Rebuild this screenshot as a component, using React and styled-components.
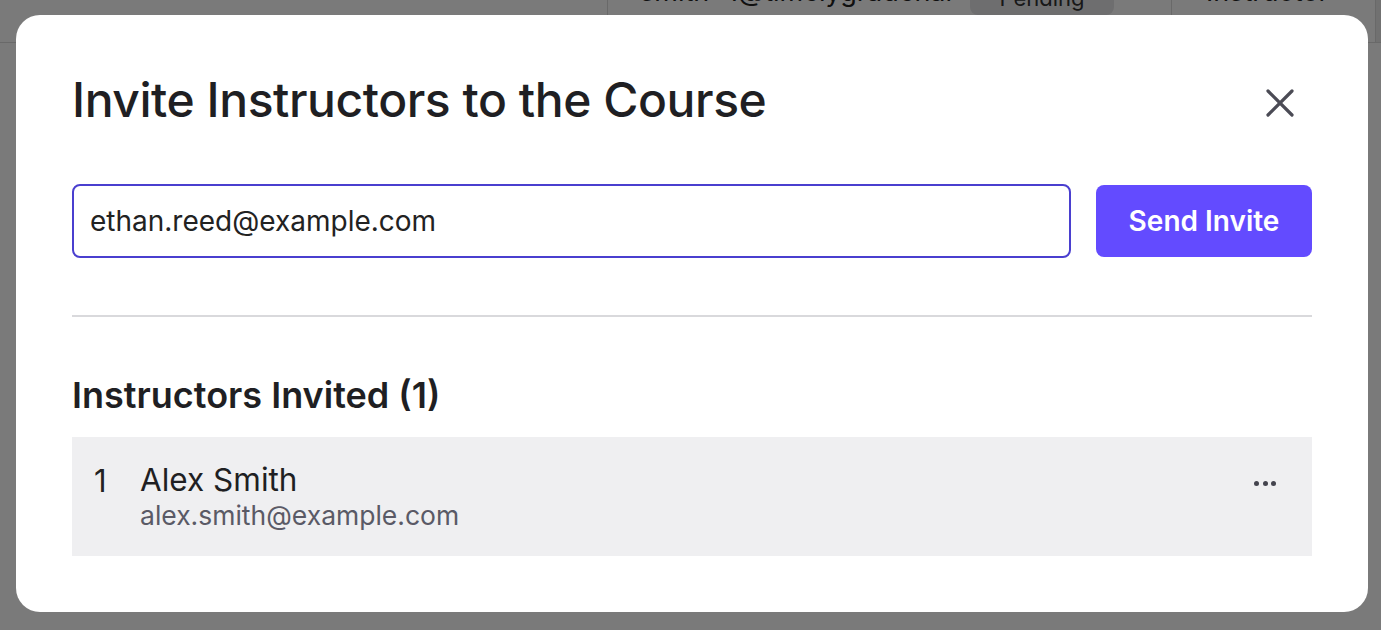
import React, { useState } from 'react';
import styled, { createGlobalStyle } from 'styled-components';

const GlobalStyle = createGlobalStyle`
  html, body { margin: 0; padding: 0; background: #fff; overflow: hidden; }
  body { font-family: Inter, 'Noto Sans', 'Liberation Sans', sans-serif; color: #1f1f23; }
  * { box-sizing: border-box; }
`;

/* page behind the dialog, scrolled so only the bottom of one row shows */
const Page = styled.div`height: 630px; margin-top: -43px;`;
const TableRow = styled.div`
  display: grid;
  grid-template-columns: 607px 564px 204px 1fr;
  height: 86px;
  border-bottom: 1px solid #dcdcdc;
`;
const Cell = styled.div`
  display: flex;
  align-items: center;
  gap: 18px;
  padding-left: ${({ $pad }) => $pad || 0}px;
  border-left: ${({ $line }) => ($line ? '1px solid #dcdcdc' : 'none')};
  background: ${({ $bg }) => $bg || 'transparent'};
  font-size: 27px;
  color: #222;
  white-space: nowrap;
  overflow: hidden;
`;
const CellText = styled.span`margin-bottom: 16px;`;
const StatusBadge = styled.span`
  display: inline-flex;
  align-items: flex-start;
  justify-content: center;
  width: 144px;
  height: 30px;
  border-radius: 8px;
  background: #e6e6e9;
  font-size: 22px;
  color: #333;
`;

const Overlay = styled.div`
  position: fixed;
  inset: 0;
  background: rgba(0, 0, 0, 0.52);
  display: flex;
  align-items: flex-start;
  padding: 15px 0 0 16px;
`;
const Dialog = styled.div`
  width: 1352px;
  height: 597px;
  background: #fff;
  border-radius: 24px;
  padding: 56px 56px 56px 56px;
  display: flex;
  flex-direction: column;
`;
const Header = styled.div`
  display: flex;
  align-items: center;
  justify-content: space-between;
`;
const Title = styled.h1`
  margin: 0;
  font-size: 48px;
  line-height: 1.2;
  font-weight: 500;
  letter-spacing: -0.45px;
  color: #1f1f23;
`;
const CloseButton = styled.button`
  width: 40px;
  height: 40px;
  margin: 7px 12px 0 0;
  border: none;
  background: none;
  padding: 0;
  display: flex;
  align-items: center;
  justify-content: center;
  cursor: pointer;
  color: #4b4b55;
`;
const InviteRow = styled.div`
  display: flex;
  align-items: center;
  gap: 25px;
  margin-top: 55px;
`;
const EmailInput = styled.input`
  flex: 1;
  height: 74px;
  border: 2px solid #4a3fcf;
  border-radius: 8px;
  padding: 0 16px;
  font-family: inherit;
  font-size: 28px;
  color: #222;
  outline: none;
`;
const PrimaryButton = styled.button`
  width: 216px;
  height: 72px;
  border: none;
  border-radius: 8px;
  background: #634bff;
  color: #fff;
  font-family: inherit;
  font-size: 28px;
  font-weight: 600;
  cursor: pointer;
`;
const Divider = styled.hr`
  margin: 57px 0 0;
  border: none;
  border-top: 2px solid #d9d9dc;
`;
const SectionTitle = styled.h2`
  margin: 57px 0 0;
  font-size: 36px;
  line-height: 1.2;
  font-weight: 600;
  color: #1f1f23;
`;
const List = styled.div`margin-top: 20px;`;
const ListItem = styled.div`
  display: flex;
  align-items: center;
  height: 119px;
  padding: 0 36px 0 22px;
  background: #efeff1;
`;
const Index = styled.span`
  width: 46px;
  align-self: flex-start;
  margin-top: 25px;
  font-size: 31px;
  line-height: 38px;
  color: #222;
`;
const Person = styled.div`
  flex: 1;
  display: flex;
  flex-direction: column;
`;
const Name = styled.span`
  font-size: 31.5px;
  line-height: 38px;
  color: #1f1f23;
`;
const Email = styled.span`
  font-size: 26.5px;
  line-height: 32px;
  color: #5a5a66;
`;
const MoreButton = styled.button`
  align-self: flex-start;
  margin-top: 42px;
  width: 22px;
  height: 10px;
  padding: 0;
  border: none;
  background: none;
  display: flex;
  align-items: center;
  justify-content: space-between;
  cursor: pointer;
`;
const Dot = styled.span`
  width: 5px;
  height: 5px;
  border-radius: 50%;
  background: #44444e;
`;

const invited = [{ name: 'Alex Smith', email: 'alex.smith@example.com' }];

export default function App() {
  const [email, setEmail] = useState('ethan.reed@example.com');

  return (
    <>
      <GlobalStyle />
      <Page>
        <TableRow>
          <Cell />
          <Cell $line $pad={32}>
            <CellText>smith+1@timelygradenai</CellText>
            <StatusBadge>Pending</StatusBadge>
          </Cell>
          <Cell $line $pad={34}><CellText>Instructor</CellText></Cell>
          <Cell $line $bg="#ececec" />
        </TableRow>
      </Page>
      <Overlay>
        <Dialog role="dialog">
          <Header>
            <Title>Invite Instructors to the Course</Title>
            <CloseButton aria-label="Close">
              <svg width="30" height="30" viewBox="0 0 30 30" fill="none">
                <path d="M3 3L27 27M27 3L3 27" stroke="currentColor" strokeWidth="3.2" strokeLinecap="round" />
              </svg>
            </CloseButton>
          </Header>
          <InviteRow>
            <EmailInput value={email} onChange={(e) => setEmail(e.target.value)} />
            <PrimaryButton>Send Invite</PrimaryButton>
          </InviteRow>
          <Divider />
          <SectionTitle>Instructors Invited ({invited.length})</SectionTitle>
          <List>
            {invited.map((p, i) => (
              <ListItem key={p.email}>
                <Index>{i + 1}</Index>
                <Person>
                  <Name>{p.name}</Name>
                  <Email>{p.email}</Email>
                </Person>
                <MoreButton aria-label="More">
                  <Dot /><Dot /><Dot />
                </MoreButton>
              </ListItem>
            ))}
          </List>
        </Dialog>
      </Overlay>
    </>
  );
}
